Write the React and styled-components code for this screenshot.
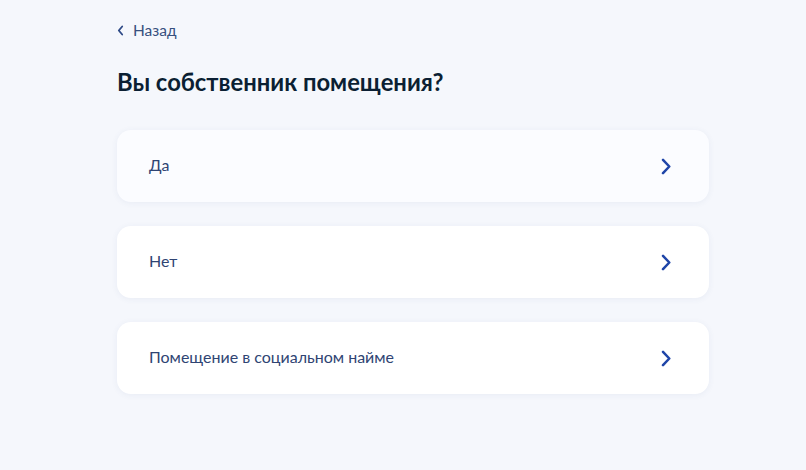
import React from "react";
import styled, { createGlobalStyle } from "styled-components";

const Global = createGlobalStyle`
  html, body { margin: 0; padding: 0; background: #f5f7fc; }
  body { font-family: Lato, "Noto Sans", sans-serif; -webkit-font-smoothing: antialiased; }
`;

const Page = styled.div`
  width: 806px;
  height: 470px;
  box-sizing: border-box;
  padding: 19px 0 0 117px;
  background: #f5f7fc;
`;

const Column = styled.div`
  width: 592px;
  display: flex;
  flex-direction: column;
`;

const Back = styled.a`
  display: flex;
  align-items: center;
  gap: 9px;
  height: 22px;
  color: #37507f;
  font-size: 15.5px;
  text-decoration: none;
  cursor: pointer;
`;

const Title = styled.h1`
  margin: 26px 0 33px;
  font-size: 23.8px;
  line-height: 30px;
  font-weight: 700;
  color: #0b1f33;
`;

const List = styled.div`
  display: flex;
  flex-direction: column;
  gap: 24px;
`;

const Option = styled.button`
  all: unset;
  box-sizing: border-box;
  height: 72px;
  padding: 0 38px 0 32px;
  display: flex;
  align-items: center;
  justify-content: space-between;
  border-radius: 14px;
  background: ${(p) => (p.$hover ? "#fbfcff" : "#ffffff")};
  box-shadow: 0 1px 6px rgba(60, 80, 140, 0.07);
  cursor: pointer;
`;

const Label = styled.span`
  margin-bottom: 3px;
  color: #2f4473;
  font-family: Lato, "Noto Sans", sans-serif;
  font-size: 16px;
  line-height: 22px;
`;

const Chevron = () => (
  <svg width="10" height="17" viewBox="0 0 10 17" fill="none">
    <path d="M2 1.8l6.3 6.7L2 15.2" stroke="#1f45a8" strokeWidth="2.5" strokeLinecap="round" strokeLinejoin="round" />
  </svg>
);

const BackChevron = () => (
  <svg width="7" height="11" viewBox="0 0 7 11" fill="none">
    <path d="M5.2 1.5L1.8 5.5l3.4 4" stroke="#2e4a86" strokeWidth="1.8" strokeLinecap="round" strokeLinejoin="round" />
  </svg>
);

const options = ["Да", "Нет", "Помещение в социальном найме"];

export default function App() {
  return (
    <>
      <Global />
      <Page>
        <Column>
          <Back>
            <BackChevron />
            Назад
          </Back>
          <Title>Вы собственник помещения?</Title>
          <List>
            {options.map((o, i) => (
              <Option key={o} $hover={i === 0}>
                <Label>{o}</Label>
                <Chevron />
              </Option>
            ))}
          </List>
        </Column>
      </Page>
    </>
  );
}
